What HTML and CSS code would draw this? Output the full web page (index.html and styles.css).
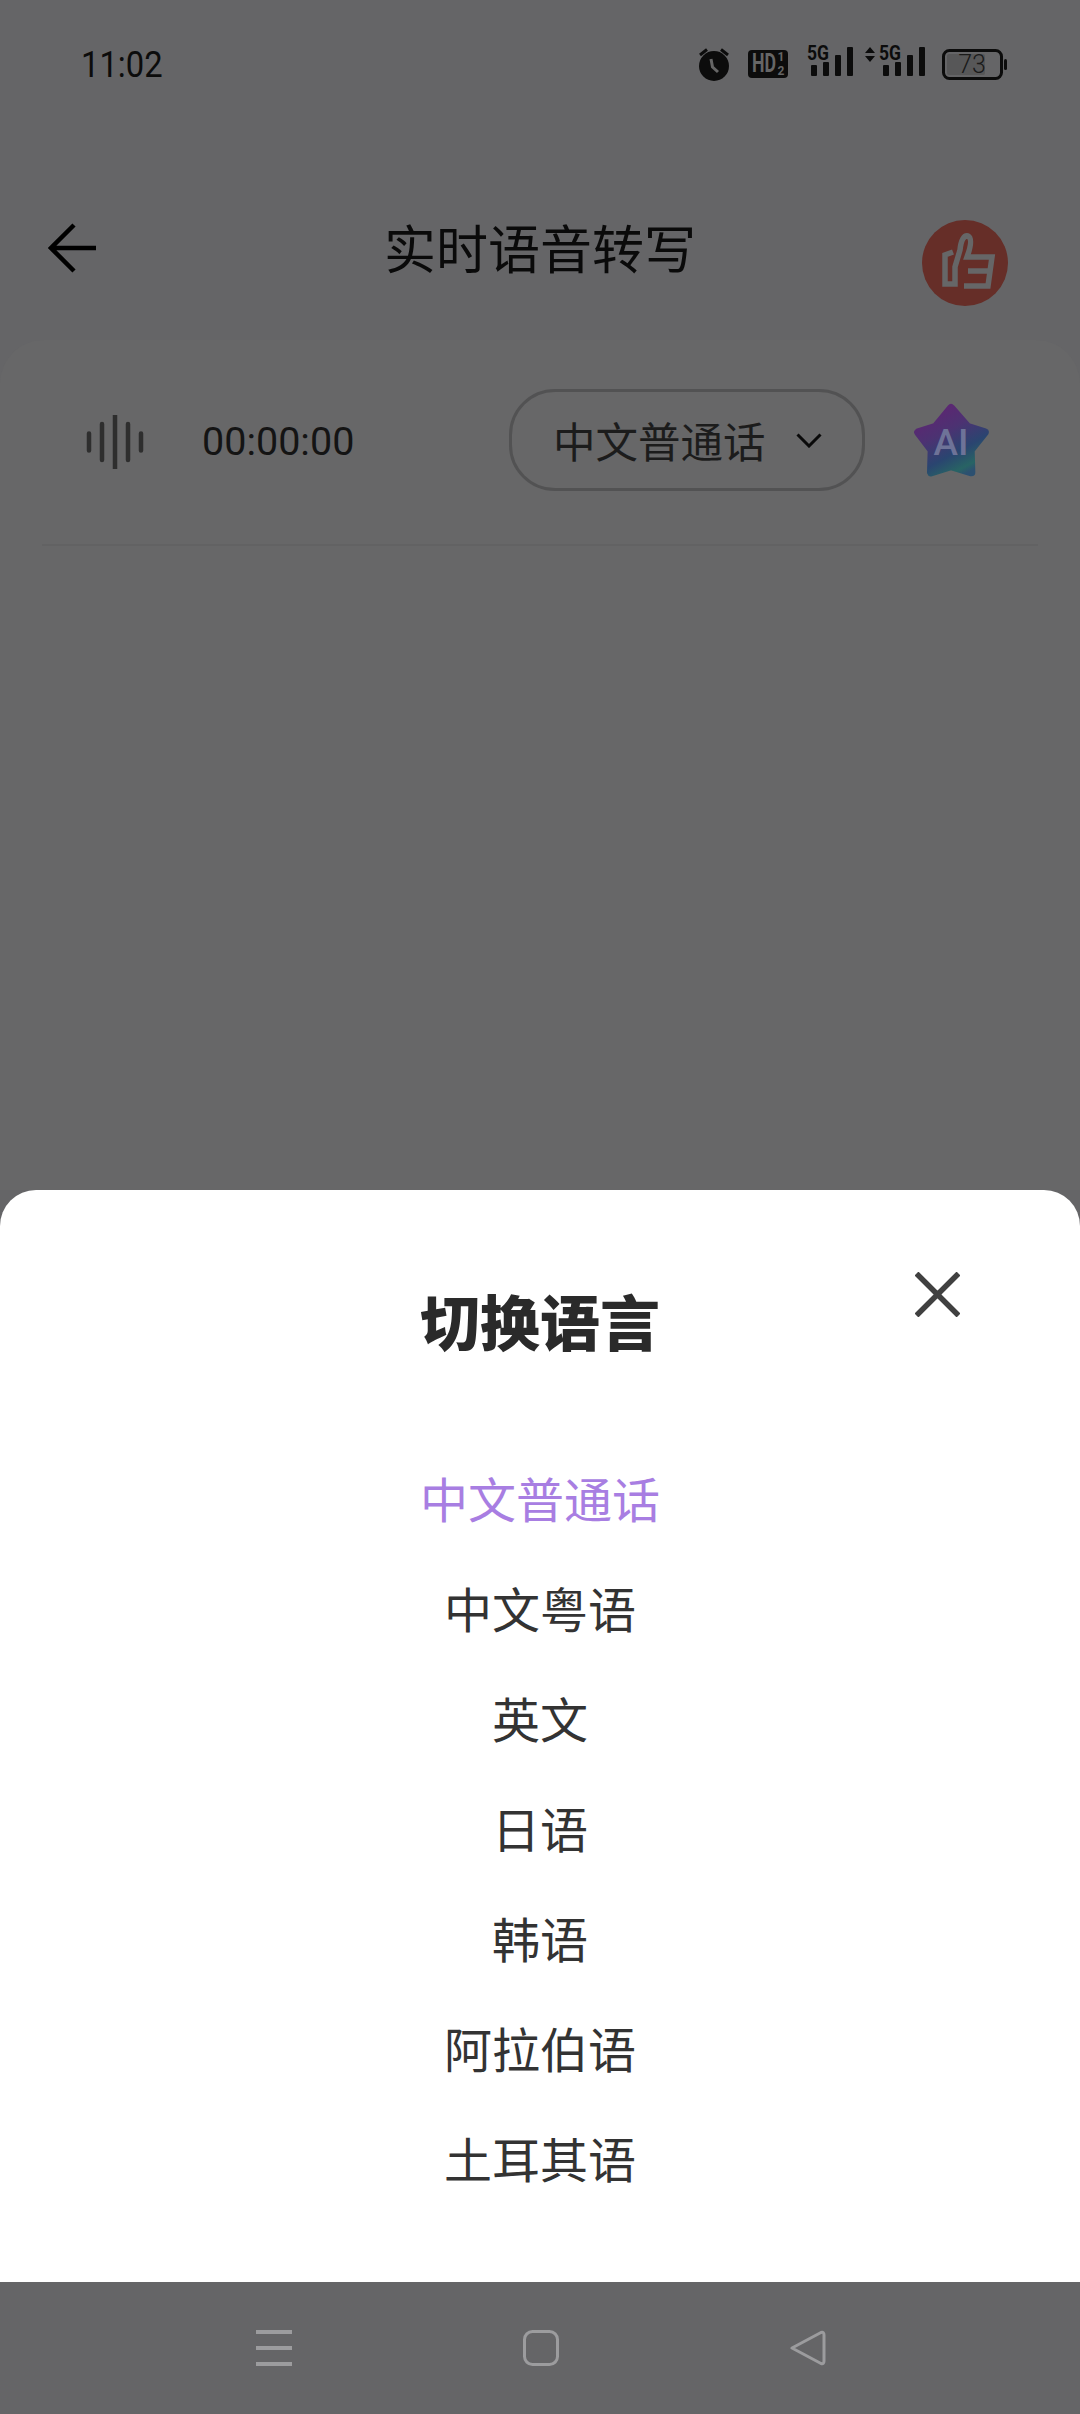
FILE: index.html
```html
<!DOCTYPE html>
<html lang="zh">
<head>
<meta charset="utf-8">
<title>实时语音转写</title>
<link rel="stylesheet" href="styles.css">
</head>
<body>
<div class="screen">
  <div class="status">
    <span class="time">11:02</span>
    <div class="status-icons">
      <svg class="ic-alarm" width="32" height="33" viewBox="0 0 32 33"><path d="M2 7 L9 1.500M30 7 L23 1.500" stroke="#0c0c0c" stroke-width="3" fill="none"/><circle cx="16" cy="18" r="15" fill="#0c0c0c"/><path d="M13 11 L14.500 19 L20 24" stroke="#666" stroke-width="3" fill="none"/></svg>
      <svg class="ic-hd" width="40" height="28" viewBox="0 0 40 28"><rect width="40" height="28" rx="4" fill="#0c0c0c"/><text x="4" y="22" class="hd-t" textLength="24" lengthAdjust="spacingAndGlyphs">HD</text><text x="33" y="11" class="hd-s">1</text><text x="33" y="25" class="hd-s">2</text></svg>
      <svg class="ic-sig1" width="46" height="37" viewBox="0 -6 46 37"><text x="0" y="13" class="sg-t" textLength="22" lengthAdjust="spacingAndGlyphs">5G</text><rect x="4" y="18" width="6" height="11" rx="1" fill="#0c0c0c"/><rect x="16" y="15" width="6" height="14" rx="1" fill="#0c0c0c"/><rect x="28" y="8" width="6" height="21" rx="1" fill="#0c0c0c"/><rect x="40" y="0" width="6" height="29" rx="1" fill="#0c0c0c"/></svg>
      <svg class="ic-sig2" width="60" height="37" viewBox="0 -6 60 37"><path d="M5 0 L10 6 H0 Z M0 9 H10 L5 15 Z" fill="#0c0c0c"/><text x="14" y="13" class="sg-t" textLength="22" lengthAdjust="spacingAndGlyphs">5G</text><rect x="18" y="18" width="6" height="11" rx="1" fill="#0c0c0c"/><rect x="30" y="15" width="6" height="14" rx="1" fill="#0c0c0c"/><rect x="42" y="8" width="6" height="21" rx="1" fill="#0c0c0c"/><rect x="54" y="0" width="6" height="29" rx="1" fill="#0c0c0c"/></svg>
      <svg class="ic-bat" width="65" height="31" viewBox="0 0 65 31"><rect x="5" y="5" width="38" height="21" rx="2" fill="#575758"/><rect x="1.500" y="1.500" width="58" height="28" rx="6" fill="none" stroke="#0c0c0c" stroke-width="3"/><rect x="62" y="10" width="3" height="11" rx="1.500" fill="#0c0c0c"/><text x="30" y="24" class="bat-t">73</text></svg>
    </div>
  </div>

  <header class="header">
    <svg class="back" width="48" height="50" viewBox="0 0 48 50"><path d="M26 2 L3 25 L26 48 M3 25 H48" stroke="#000" stroke-width="4.500" fill="none"/></svg>
    <h1 class="title">实时语音转写</h1>
    <svg class="thumb" width="86" height="86" viewBox="0 0 86 86"><circle cx="43" cy="43" r="43" fill="#662e28"/><path d="M31 32 L23 35 V64 H33 V47 L38 30 C39 20 42 15 46 16 C50 18 49 26 45 37 H70 L66 66 H42 M46 51 H67" fill="none" stroke="#666667" stroke-width="5.500"/></svg>
  </header>

  <section class="card">
    <div class="record-row">
      <svg class="wave" width="58" height="54" viewBox="0 0 58 54"><path d="M3 18.500V35.500M16 9V45M29 0V54M42 9V45M55 18.500V35.500" stroke="#2e2e2e" stroke-width="4.500" stroke-linecap="round" fill="none"/></svg>
      <span class="timer">00:00:00</span>
      <div class="pill">
        <span class="pill-text">中文普通话</span>
        <svg width="26" height="15" viewBox="0 0 26 15"><path d="M1.500 1.500 L13 13 L24.500 1.500" stroke="#0a0a0a" stroke-width="3" fill="none"/></svg>
      </div>
      <svg class="star" width="77" height="74" viewBox="97 33 233 225">
        <defs><linearGradient id="sg" x1="0.250" y1="0.100" x2="0.750" y2="1"><stop offset="0" stop-color="#5a2872"/><stop offset="0.300" stop-color="#4c3272"/><stop offset="0.650" stop-color="#2a4570"/><stop offset="0.900" stop-color="#286464"/><stop offset="1" stop-color="#2c5070"/></linearGradient></defs>
        <path d="M212 48 L262 105 L315 122 L272 176 L274 244 L212 225 L151 244 L153 176 L112 122 L165 105 Z" fill="url(#sg)" stroke="url(#sg)" stroke-width="24" stroke-linejoin="round"/>
        <text x="212" y="192" class="star-t">AI</text>
      </svg>
    </div>
  </section>

  <section class="sheet">
    <svg class="close" width="45" height="45" viewBox="0 0 45 45"><path d="M1.500 1.500 L43.500 43.500 M43.500 1.500 L1.500 43.500" stroke="#404040" stroke-width="5.500" fill="none"/></svg>
    <h2 class="sheet-title">切换语言</h2>
    <ul class="options">
      <li class="option active">中文普通话</li>
      <li class="option">中文粤语</li>
      <li class="option">英文</li>
      <li class="option">日语</li>
      <li class="option">韩语</li>
      <li class="option">阿拉伯语</li>
      <li class="option">土耳其语</li>
    </ul>
  </section>

  <nav class="navbar">
    <svg width="36" height="36" viewBox="0 0 36 36"><path d="M0 2H36M0 18H36M0 34H36" stroke="#9c9c9e" stroke-width="4" fill="none"/></svg>
    <svg width="36" height="36" viewBox="0 0 36 36"><rect x="1.500" y="1.500" width="33" height="33" rx="8" fill="none" stroke="#9c9c9e" stroke-width="3"/></svg>
    <svg width="36" height="36" viewBox="0 0 36 36"><path d="M2 18 L31 2.500 Q34 1.500 34 5 V31 Q34 34.500 31 33.500 Z" fill="none" stroke="#9c9c9e" stroke-width="3" stroke-linejoin="round"/></svg>
  </nav>
</div>
</body>
</html>
```
FILE: styles.css
```css
* { box-sizing: border-box; }
html, body { margin: 0; padding: 0; }
body { font-family: Roboto, "Noto Sans CJK SC", sans-serif; }
.screen {
  width: 1080px;
  height: 2414px;
  display: flex;
  flex-direction: column;
  background: #656567;
  overflow: hidden;
}
.status {
  height: 128px;
  flex: none;
  display: flex;
  align-items: center;
  justify-content: space-between;
  padding: 0 73px 0 81px;
}
.time {
  font-size: 36px;
  line-height: 40px;
  margin-top: 2px;
  color: #0c0c0c;
  transform: scaleX(0.91);
  transform-origin: left center;
}
.status-icons { display: flex; align-items: center; }
.ic-hd { margin-left: 18px; }
.ic-sig1 { margin-left: 19px; margin-top: -10px; }
.ic-sig2 { margin-left: 12px; margin-top: -10px; }
.ic-bat { margin-left: 17px; }
.hd-t { font: 700 25px "Roboto", sans-serif; fill: #666; }
.hd-s { font: 700 12px "Roboto", sans-serif; fill: #666; text-anchor: middle; }
.sg-t { font: 700 21px "Roboto", sans-serif; fill: #0c0c0c; }
.bat-t { font: 300 25px "Roboto", sans-serif; fill: #1a1a1a; text-anchor: middle; }
.header {
  height: 212px;
  flex: none;
  display: grid;
  grid-template-columns: 1fr auto 1fr;
  align-items: start;
  padding-top: 92px;
}
.back { margin: 3px 0 0 48px; display: block; }
.title {
  margin: -2px 0 0;
  font: 400 52px/58px "Noto Sans CJK SC", sans-serif;
  color: #0a0a0a;
}
.thumb { justify-self: end; margin-right: 72px; display: block; }
.card {
  flex: 1;
  min-height: 0;
  background: #676768;
  border-radius: 44px 44px 0 0;
  padding: 0 42px;
}
.record-row {
  height: 206px;
  border-bottom: 2px solid #626263;
  display: flex;
  align-items: center;
  padding: 0 48px 4px 44px;
}
.wave { margin-top: 4px; display: block; }
.timer { margin: 4px 0 0 58px; font-size: 39.5px; color: #141414; line-height: 46px; }
.pill {
  margin-left: auto;
  width: 356px;
  height: 102px;
  border: 3px solid #525253;
  border-radius: 46px;
  display: flex;
  align-items: center;
  padding-left: 41px;
  gap: 30px;
}
.pill-text { font: 400 42.5px/50px "Noto Sans CJK SC", sans-serif; color: #1c1c1c; white-space: nowrap; }
.star { margin-left: 48px; display: block; }
.star-t { font: 500 112px "Roboto", sans-serif; fill: #6e7398; text-anchor: middle; }
.sheet {
  position: relative;
  flex: none;
  height: 1092px;
  background: #fff;
  border-radius: 36px 36px 0 0;
  padding-top: 90px;
  font-family: "Noto Sans CJK SC", sans-serif;
}
.close { position: absolute; left: 915px; top: 82px; display: block; }
.sheet-title {
  margin: 0 0 82px;
  text-align: center;
  font: 900 60px/80px "Noto Sans CJK SC", sans-serif;
  color: #2a2a2a;
}
.options { list-style: none; margin: 0; padding: 0; }
.option {
  height: 110px;
  display: flex;
  align-items: center;
  justify-content: center;
  font-size: 48px;
  color: #333;
}
.option.active { color: #a87ee2; }
.navbar {
  flex: none;
  height: 132px;
  display: flex;
  align-items: center;
  justify-content: space-between;
  padding: 0 254px 0 256px;
  background: #656567;
}
```
